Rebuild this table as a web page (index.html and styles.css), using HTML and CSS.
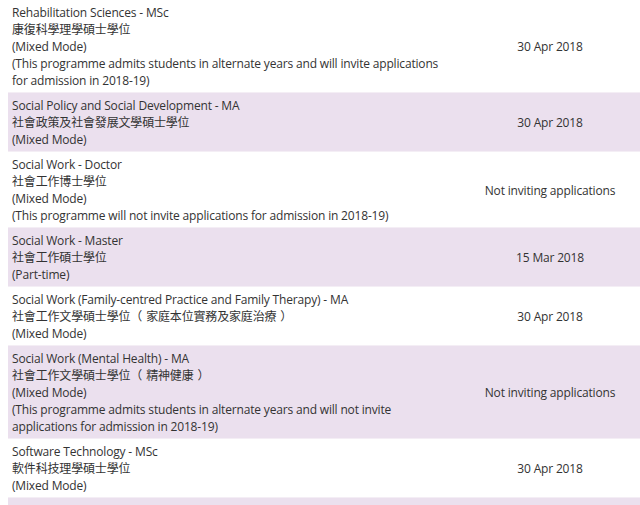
FILE: index.html
```html
<!DOCTYPE html>
<html>
<head>
<meta charset="utf-8">
<link rel="stylesheet" href="styles.css">
</head>
<body>
<table class="progs">
<tr><td class="name">Rehabilitation Sciences - MSc<br>康復科學理學碩士學位<br>(Mixed Mode)<br>(This programme admits students in alternate years and will invite applications for admission in 2018-19)</td><td class="date">30 Apr 2018</td></tr>
<tr class="alt"><td class="name">Social Policy and Social Development - MA<br>社會政策及社會發展文學碩士學位<br>(Mixed Mode)</td><td class="date">30 Apr 2018</td></tr>
<tr><td class="name">Social Work - Doctor<br>社會工作博士學位<br>(Mixed Mode)<br>(This programme will not invite applications for admission in 2018-19)</td><td class="date">Not inviting applications</td></tr>
<tr class="alt"><td class="name">Social Work - Master<br>社會工作碩士學位<br>(Part-time)</td><td class="date">15 Mar 2018</td></tr>
<tr><td class="name">Social Work (Family-centred Practice and Family Therapy) - MA<br>社會工作文學碩士學位<span class="po">（</span>家庭本位實務及家庭治療<span class="pc">）</span><br>(Mixed Mode)</td><td class="date">30 Apr 2018</td></tr>
<tr class="alt"><td class="name">Social Work (Mental Health) - MA<br>社會工作文學碩士學位<span class="po">（</span>精神健康<span class="pc">）</span><br>(Mixed Mode)<br>(This programme admits students in alternate years and will not invite applications for admission in 2018-19)</td><td class="date">Not inviting applications</td></tr>
<tr><td class="name">Software Technology - MSc<br>軟件科技理學碩士學位<br>(Mixed Mode)</td><td class="date">30 Apr 2018</td></tr>
<tr class="alt"><td class="name">Statistics - MSc<br>統計學理學碩士學位<br>(Mixed Mode)</td><td class="date">30 Apr 2018</td></tr>
</table>
</body>
</html>
```
FILE: styles.css
```css
html, body {
  margin: 0;
  padding: 0;
  background: #ffffff;
  overflow: hidden;
}
body {
  padding-left: 8px;
  font-family: "Open Sans", "Noto Sans CJK TC", sans-serif;
  font-size: 12px;
  line-height: 17px;
  color: #333333;
  letter-spacing: -0.17px;
}
.progs {
  border-collapse: collapse;
  width: 632px;
}
.progs td {
  padding: 4px 4px 3px 4px;
  vertical-align: middle;
  border-bottom: 1px solid #f4eef5;
}
.progs .alt td {
  background: #ebe0ee;
}
.name {
  width: 444px;
  text-align: left;
}
.date {
  text-align: center;
}
.po {
  padding-right: 4px;
}
.pc {
  padding-left: 4px;
}
```
